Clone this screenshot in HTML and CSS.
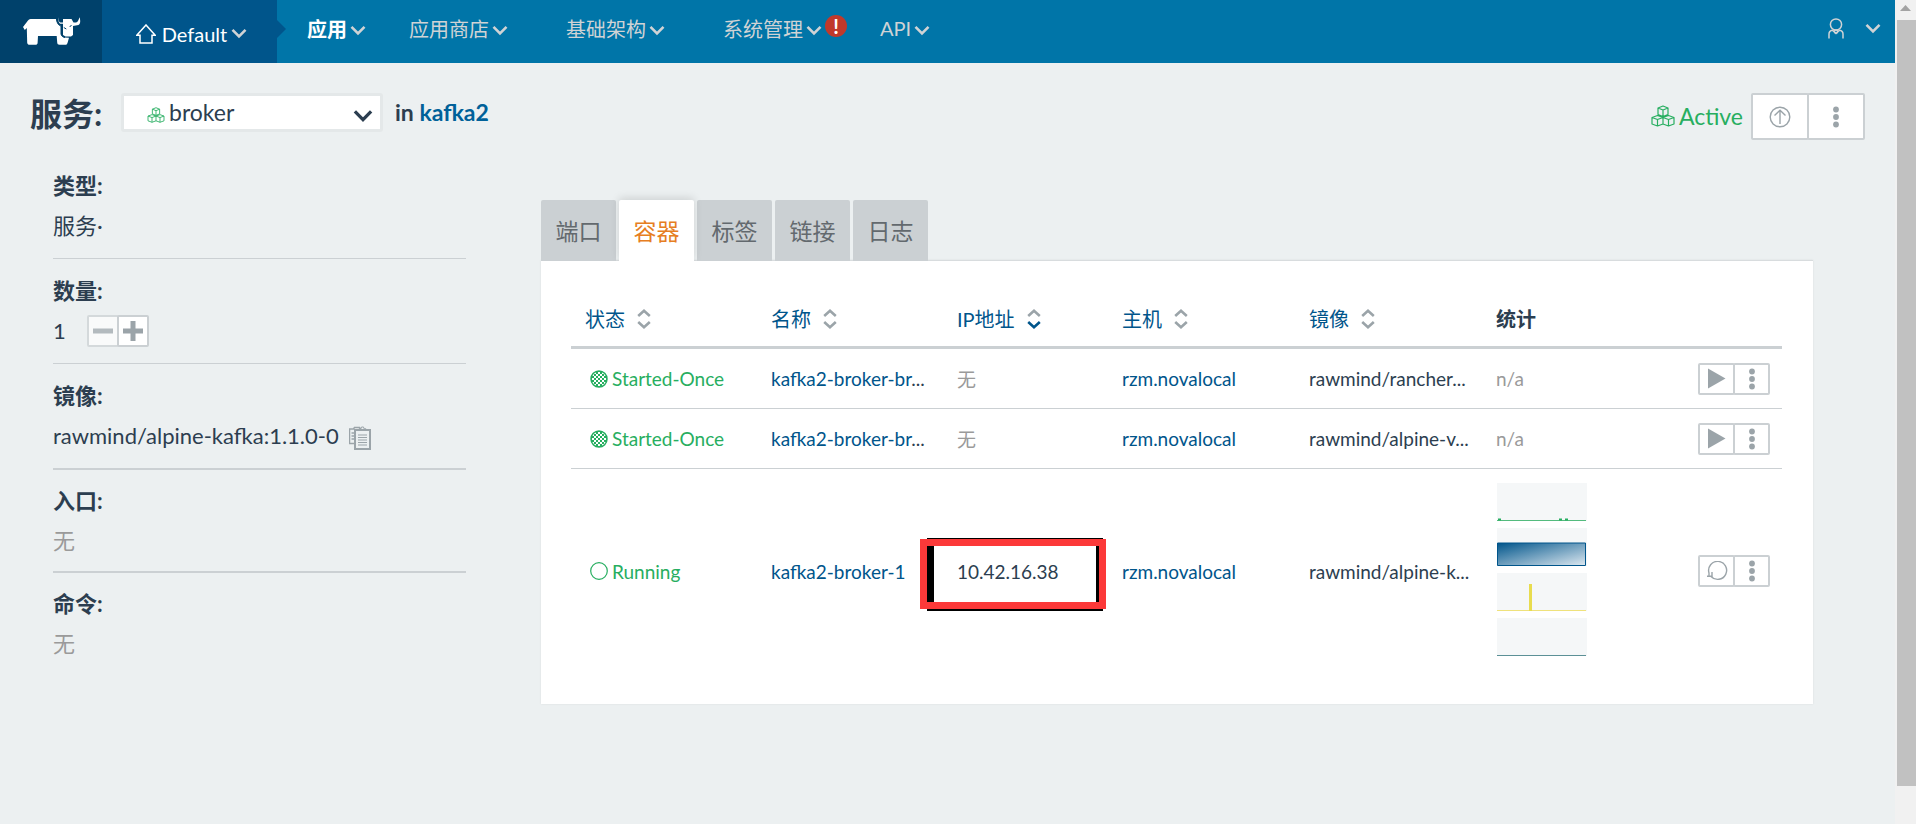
FILE: index.html
```
<!DOCTYPE html>
<html lang="zh-CN">
<head>
<meta charset="utf-8">
<title>服务: broker</title>
<link rel="stylesheet" href="styles.css">
</head>
<body>
<svg class="defs" aria-hidden="true">
  <defs><pattern id="mesh" width="4" height="4" patternUnits="userSpaceOnUse"><path d="M0 0h2v2H0zM2 2h2v2H2z" fill="#27ae60"/></pattern></defs>
  <symbol id="caret" viewBox="0 0 16 11"><path d="M1.5 1.8 8 8.5l6.500-6.700" fill="none" stroke="currentColor" stroke-width="2.600"/></symbol>
  <symbol id="cubes" viewBox="0 0 24 22"><g fill="none" stroke="currentColor" stroke-width="1.200" stroke-linejoin="round"><path d="M7 3l5-2 5 2v6.500l-5 2-5-2zM7 3l5 2 5-2M12 5v6.500M1 12.500l5.500-2 5.500 2v6.500l-5.500 2-5.500-2zM1 12.500l5.500 2 5.500-2M6.500 14.500V21M12 12.500l5.500-2 5.500 2v6.500l-5.500 2-5.500-2M12 12.500l5.500 2 5.500-2M17.500 14.500V21"/></g></symbol>
  <symbol id="dots" viewBox="0 0 6 22"><g fill="currentColor"><circle cx="3" cy="3.500" r="2.900"/><circle cx="3" cy="11" r="2.900"/><circle cx="3" cy="18.500" r="2.900"/></g></symbol>
  <symbol id="play" viewBox="0 0 18 21"><path d="M0 .5 17.500 10.500 0 20.500z" fill="currentColor"/></symbol>
  <symbol id="sort" viewBox="0 0 14 20"><g fill="none" stroke-width="2.600"><path d="M1.200 7 7 1.800 12.800 7" stroke="#9ba4a9"/><path d="M1.200 13 7 18.200 12.800 13"/></g></symbol>
  <symbol id="once" viewBox="0 0 18 18"><circle cx="9" cy="9" r="8" fill="url(#mesh)" stroke="currentColor" stroke-width="1.500"/></symbol>
</svg>
<div class="window">
  <div class="page">
    <header class="topbar">
      <a class="logo" href="#" aria-label="首页">
        <svg width="60" height="28" viewBox="0 0 60 28"><path fill="#fff" d="M1 10 6 3.500C7 2.300 8 2 10 2h24c.5 2.500 1.500 5.500 4 6.500h1v8.500c0 1.500 1 2.500 3 3.500l5 .2-1.500 5.300c-.4 1.300-1 1.800-2.500 1.800h-5.500c-1.500 0-2.200-.8-2.300-2.200l-.5-6.600H16l-.4 7c-.1 1.200-.9 1.800-2 1.800H7.500c-1.300 0-2-.6-2.300-2L4.800 11l-2 2z"/><path fill="#fff" d="M36.500.2c-.7 3 .1 5 1.500 6.500h3V18l2.500 1.500h5.500L51 18V9l5.500-1c1.800-.6 2.300-4 1-7.700-1 3.200-1.600 4.700-3.500 5.200h-2.500L49.500 2H41v3.500h-2.500C36.800 5 36.400 3 36.500.2z"/><path d="M34.500 2c.5 3 1 6 4.500 7v8c.5 2.500 2 3 4 3.500" fill="none" stroke="#00416b"/><path d="M41.800 10.500l2.500 1.500M49.500 8l-1.800 2" stroke="#00416b"/></svg>
      </a>
      <button class="env" type="button">
        <svg width="20" height="20" viewBox="0 0 20 20" fill="none" stroke="#fff" stroke-width="1.500"><path d="M.8 11.200 10 1l9.200 10.200H16V19H4v-7.800z"/></svg>
        <span>Default</span>
        <svg class="caret"><use href="#caret"/></svg>
      </button>
      <nav class="nav">
        <a class="active" href="#">应用<svg class="caret"><use href="#caret"/></svg></a>
        <a href="#">应用商店<svg class="caret"><use href="#caret"/></svg></a>
        <a href="#">基础架构<svg class="caret"><use href="#caret"/></svg></a>
        <a href="#">系统管理<svg class="caret"><use href="#caret"/></svg><b class="alert">!</b></a>
        <a href="#">API<svg class="caret"><use href="#caret"/></svg></a>
      </nav>
      <button class="user" type="button" aria-label="用户">
        <svg width="16" height="21" viewBox="0 0 16 21" fill="none" stroke="currentColor" stroke-width="1.500"><circle cx="8" cy="6.500" r="5.600"/><path d="M1 20.500V16c0-2.200 1.500-3.500 3.500-3.800M15 20.500V16c0-2.200-1.500-3.500-3.500-3.800M4.500 12.200 8 15.500l3.500-3.300"/><circle cx="8" cy="13.500" r="1.600"/></svg>
        <svg class="caret"><use href="#caret"/></svg>
      </button>
    </header>

    <div class="titlebar">
      <h1><label for="service">服务:</label></h1>
      <div class="picker">
        <select id="service"><option>broker</option></select>
        <svg class="picker-icon" width="18" height="16"><use href="#cubes"/></svg>
        <svg class="picker-caret" width="20" height="14"><use href="#caret"/></svg>
      </div>
      <p class="stack">in <a href="#">kafka2</a></p>
      <p class="state"><svg width="24" height="22"><use href="#cubes"/></svg>Active</p>
      <div class="group large">
        <button type="button" aria-label="升级"><svg width="22" height="22" viewBox="0 0 22 22" fill="none" stroke="currentColor" stroke-width="1.400"><circle cx="11" cy="11" r="9.800"/><path d="M11 18V4.500M5.500 9.500 11 4.200l5.500 5.300"/></svg></button>
        <button type="button" aria-label="更多"><svg width="6" height="22"><use href="#dots"/></svg></button>
      </div>
    </div>

    <main class="content">
      <dl class="facts">
        <div><dt>类型:</dt><dd>服务·</dd></div>
        <div><dt>数量:</dt><dd class="scale">1
          <span class="group step">
            <button type="button" disabled aria-label="减少"><svg width="20" height="20"><path d="M0 7.500h20v5H0z" fill="currentColor"/></svg></button>
            <button type="button" aria-label="增加"><svg width="20" height="20"><path d="M0 7.500h7.500V0h5v7.500H20v5h-7.500V20h-5v-7.500H0z" fill="currentColor"/></svg></button>
          </span></dd></div>
        <div><dt>镜像:</dt><dd>rawmind/alpine-kafka:1.1.0-0<button class="copy" type="button" aria-label="复制"><svg width="22" height="24" viewBox="0 0 22 24" fill="none" stroke="currentColor"><path d="M5.500 17.500h-5V3h4l1-1.500h5l1 1.500M2.500 7h3M2.500 10h3M2.500 13h3" stroke-width="1.500"/><path d="M6 4h15v19H6z" stroke-width="2"/><path d="M10 4.500V2.800h2l.5-1.800h2l.5 1.800h2v1.700" /><path d="M9 9h9M9 11.500h9M9 14h9M9 16.500h9M9 19h9"/></svg></button></dd></div>
        <div class="thick"><dt>入口:</dt><dd class="none">无</dd></div>
        <div class="thick"><dt>命令:</dt><dd class="none">无</dd></div>
      </dl>

      <section>
        <div class="tabs" role="tablist">
          <button type="button" role="tab">端口</button>
          <button type="button" role="tab" class="selected" aria-selected="true">容器</button>
          <button type="button" role="tab">标签</button>
          <button type="button" role="tab">链接</button>
          <button type="button" role="tab">日志</button>
        </div>
        <div class="panel">
          <table>
            <colgroup><col class="c-state"><col class="c-name"><col class="c-ip"><col class="c-host"><col class="c-image"><col></colgroup>
            <thead>
              <tr>
                <th><a href="#">状态<svg class="sort"><use href="#sort"/></svg></a></th>
                <th><a href="#">名称<svg class="sort"><use href="#sort"/></svg></a></th>
                <th><a href="#">IP地址<svg class="sort on"><use href="#sort"/></svg></a></th>
                <th><a href="#">主机<svg class="sort"><use href="#sort"/></svg></a></th>
                <th><a href="#">镜像<svg class="sort"><use href="#sort"/></svg></a></th>
                <th>统计</th>
              </tr>
            </thead>
            <tbody>
              <tr>
                <td><span class="status"><svg width="18" height="18"><use href="#once"/></svg>Started-Once</span></td>
                <td><a href="#">kafka2-broker-br</a>...</td>
                <td class="none">无</td>
                <td><a href="#">rzm.novalocal</a></td>
                <td>rawmind/rancher...</td>
                <td><div class="stats"><span class="none">n/a</span>
                  <div class="group"><button type="button" aria-label="启动"><svg width="18" height="21"><use href="#play"/></svg></button><button type="button" aria-label="更多"><svg width="6" height="22"><use href="#dots"/></svg></button></div></div></td>
              </tr>
              <tr>
                <td><span class="status"><svg width="18" height="18"><use href="#once"/></svg>Started-Once</span></td>
                <td><a href="#">kafka2-broker-br</a>...</td>
                <td class="none">无</td>
                <td><a href="#">rzm.novalocal</a></td>
                <td>rawmind/alpine-v...</td>
                <td><div class="stats"><span class="none">n/a</span>
                  <div class="group"><button type="button" aria-label="启动"><svg width="18" height="21"><use href="#play"/></svg></button><button type="button" aria-label="更多"><svg width="6" height="22"><use href="#dots"/></svg></button></div></div></td>
              </tr>
              <tr>
                <td><span class="status"><svg width="18" height="18"><circle cx="9" cy="9" r="8.300" fill="none" stroke="currentColor" stroke-width="1.200"/></svg>Running</span></td>
                <td><a href="#">kafka2-broker-1</a></td>
                <td class="marked">10.42.16.38<span class="mark-shadow"></span><span class="mark"></span></td>
                <td><a href="#">rzm.novalocal</a></td>
                <td>rawmind/alpine-k...</td>
                <td><div class="stats">
                  <div class="charts">
                    <svg width="90" height="38"><path d="M0 37.500h89" stroke="#54bb7e"/><path d="M1 36.500h3M62 36.500h3M68 36.500h3" stroke="#27ae60" stroke-width="2"/></svg>
                    <svg width="90" height="38"><defs><linearGradient id="mem" x1="0" y1="0" x2="1" y2="1"><stop offset="0" stop-color="#00558b"/><stop offset="1" stop-color="#dde8f0"/></linearGradient></defs><path d="M.5 15h88v22.500H.5z" fill="url(#mem)" stroke="#00558b"/></svg>
                    <svg width="90" height="38"><path d="M0 37.500h89" stroke="#efe27c"/><path d="M33.500 11v27" stroke="#e8dc4f" stroke-width="3"/></svg>
                    <svg width="90" height="38"><path d="M0 37.500h89" stroke="#5c9096"/></svg>
                  </div>
                  <div class="group"><button type="button" aria-label="重启"><svg width="22" height="20" viewBox="0 0 22 20" fill="none" stroke="currentColor" stroke-width="1.400"><path d="M5 15.500A9 9 0 1 0 3 12v3.500"/><path d="M1 15.200h5V11"/></svg></button><button type="button" aria-label="更多"><svg width="6" height="22"><use href="#dots"/></svg></button></div></div></td>
              </tr>
            </tbody>
          </table>
        </div>
      </section>
    </main>
  </div>
  <div class="scrollbar" aria-hidden="true">
    <svg width="12" height="20"><path d="M0 11 5.500 5 11 11z" fill="#a3a3a3"/></svg>
    <div class="thumb"></div>
  </div>
</div>
</body>
</html>
```
FILE: styles.css
```
* { box-sizing: border-box; }
body {
  margin: 0;
  background: #ecf0f1;
  color: #2c3e50;
  font-family: Lato, "Noto Sans CJK SC", sans-serif;
  font-size: 19px;
}
h1, p, dl, dd { margin: 0; }
a { color: #00558b; text-decoration: none; }
button { font: inherit; color: inherit; border: 0; padding: 0; background: none; cursor: pointer; }
svg { flex: none; }
.defs { position: absolute; width: 0; height: 0; }
.none { color: #9a9a9a; }

.window { display: flex; min-height: 100vh; }
.page { flex: 1; min-width: 0; }

/* top bar */
.topbar { display: flex; height: 63px; background: #0075a8; color: #d0d3d5; font-size: 20px; }
.logo { width: 102px; padding: 17px 0 0 22px; background: #00416b; }
.env {
  position: relative;
  display: flex;
  align-items: center;
  justify-content: center;
  width: 175px;
  padding: 4px 0 0 4px;
  background: #00558b;
  color: #fff;
}
.env span { margin: 0 4px 0 6px; }
.env .caret { color: #d0d3d5; }
.env::after {
  content: "";
  position: absolute;
  left: 100%;
  top: 20px;
  border: 9px solid transparent;
  border-right: 0;
  border-left-color: #00558b;
}
.caret { width: 16px; height: 11px; }
.nav { display: flex; gap: 58px; margin-left: 30px; height: 56px; align-items: center; }
.nav a { position: relative; display: flex; align-items: center; gap: 3px; color: inherit; white-space: nowrap; }
.nav .active { color: #fff; font-weight: bold; margin-right: -15px; }
.nav .caret { color: #d0d3d5; margin-top: 4px; }
.alert {
  position: absolute;
  left: 100%;
  top: 1px;
  width: 22px;
  height: 22px;
  margin-left: 3px;
  border-radius: 50%;
  background: #c0392b;
  color: #fff;
  line-height: 22px;
  text-align: center;
}
.user { display: flex; align-items: center; gap: 21px; height: 57px; margin-left: auto; padding-right: 14px; }

/* title row */
.titlebar { display: flex; align-items: flex-start; padding: 30px 30px 0 30px; }
h1 { width: 91px; font-size: 32px; line-height: 42px; }
.picker { position: relative; width: 262px; }
.picker select {
  appearance: none;
  display: block;
  width: 100%;
  height: 39px;
  padding: 0 40px 2px 45px;
  border: 3px solid #e4e8e9;
  border-radius: 3px;
  background: #fff;
  color: inherit;
  font: inherit;
  font-size: 23px;
}
.picker-icon { position: absolute; left: 26px; top: 14px; color: #27ae60; }
.picker-caret { position: absolute; right: 10px; top: 16px; }
.stack { margin-left: 12px; font-size: 23px; line-height: 39px; font-weight: bold; }
.stack a { color: #006199; }
.state { display: flex; align-items: center; gap: 4px; margin: 0 8px 0 auto; color: #27ae60; font-size: 23px; line-height: 46px; }

/* joined icon buttons */
.group { display: flex; color: #9ba4a9; }
.group button {
  display: flex;
  align-items: center;
  justify-content: center;
  width: 37px;
  height: 32px;
  border: 2px solid #cbd0d3;
  border-radius: 2px;
  background: #fff;
}
.group button + button { margin-left: -2px; }
.group.large button { width: 58px; height: 47px; }
.group.step button { width: 32px; height: 32px; }
.group.step button:disabled { opacity: .7; }

/* body */
.content {
  display: grid;
  grid-template-columns: 413fr 1272fr;
  gap: 75px;
  align-items: start;
  padding: 26px 82px 24px 53px;
}
.facts { font-size: 22px; line-height: 40px; }
.facts > div { padding-bottom: 12px; }
.facts > div + div { padding-top: 12px; border-top: 1px solid #cbd0d3; }
.facts > div + .thick { padding-top: 11px; padding-bottom: 10px; border-top-width: 2px; }
.facts dt { font-weight: bold; }
.facts dd { height: 40px; white-space: nowrap; }
.scale { display: flex; gap: 21px; align-items: center; }
.copy { margin-left: 10px; color: #9ba4a9; vertical-align: middle; line-height: 0; }

.tabs { display: flex; gap: 3px; margin-top: 34px; }
.tabs button {
  width: 75px;
  height: 61px;
  padding-bottom: 2px;
  border-radius: 2px 2px 0 0;
  background: #cbd0d3;
  color: #63696e;
  font-size: 23px;
}
.tabs .selected {
  position: relative;
  z-index: 1;
  background: #fff;
  color: #e67e22;
  box-shadow: 0 -2px 8px rgba(0, 0, 0, .13);
  clip-path: inset(-10px -10px 0 -10px);
}
.panel { padding: 24px 31px 31px 30px; background: #fff; border-top: 1px solid #d8dcde; margin-top: -1px; box-shadow: 0 0 2px rgba(0, 0, 0, .08); }

table { width: 100%; table-layout: fixed; border-collapse: separate; border-spacing: 0; }
.c-state, .c-name { width: 186px; }
.c-ip { width: 165px; }
.c-host, .c-image { width: 187px; }
th { height: 64px; padding: 6px 0 0 14px; text-align: left; font-size: 20px; border-bottom: 3px solid #cbd0d3; }
th a { display: flex; align-items: center; gap: 12px; font-weight: normal; }
.sort { width: 14px; height: 20px; stroke: #9ba4a9; }
.sort.on { stroke: #00558b; }
td { height: 60px; padding: 0 0 0 14px; border-bottom: 1px solid #cbd0d3; white-space: nowrap; }
tbody tr:last-child td { height: 204px; border-bottom: 0; }
.status { display: flex; align-items: center; gap: 4px; padding-left: 5px; color: #27ae60; }
.stats { display: flex; align-items: center; justify-content: space-between; padding-right: 12px; }
.charts { display: grid; gap: 7px; padding: 0 0 4px 1px; }
.charts svg { display: block; background: #f5f7f8; }

/* highlight drawn round the address */
.marked { position: relative; }
.mark-shadow, .mark { position: absolute; }
.mark-shadow { left: -16px; top: 69px; width: 176px; height: 73px; border: solid #000; border-width: 8px 7px; }
.mark { left: -23px; top: 70px; width: 186px; height: 70px; border: 7px solid #fc3939; }

/* scrollbar */
.scrollbar { display: flex; flex-direction: column; align-items: center; width: 21px; padding-left: 2px; background: #f1f1f1; }
.scrollbar svg { margin-right: 1px; }
.thumb { width: 100%; flex: 0 0 93%; background: #c1c1c1; }
```
